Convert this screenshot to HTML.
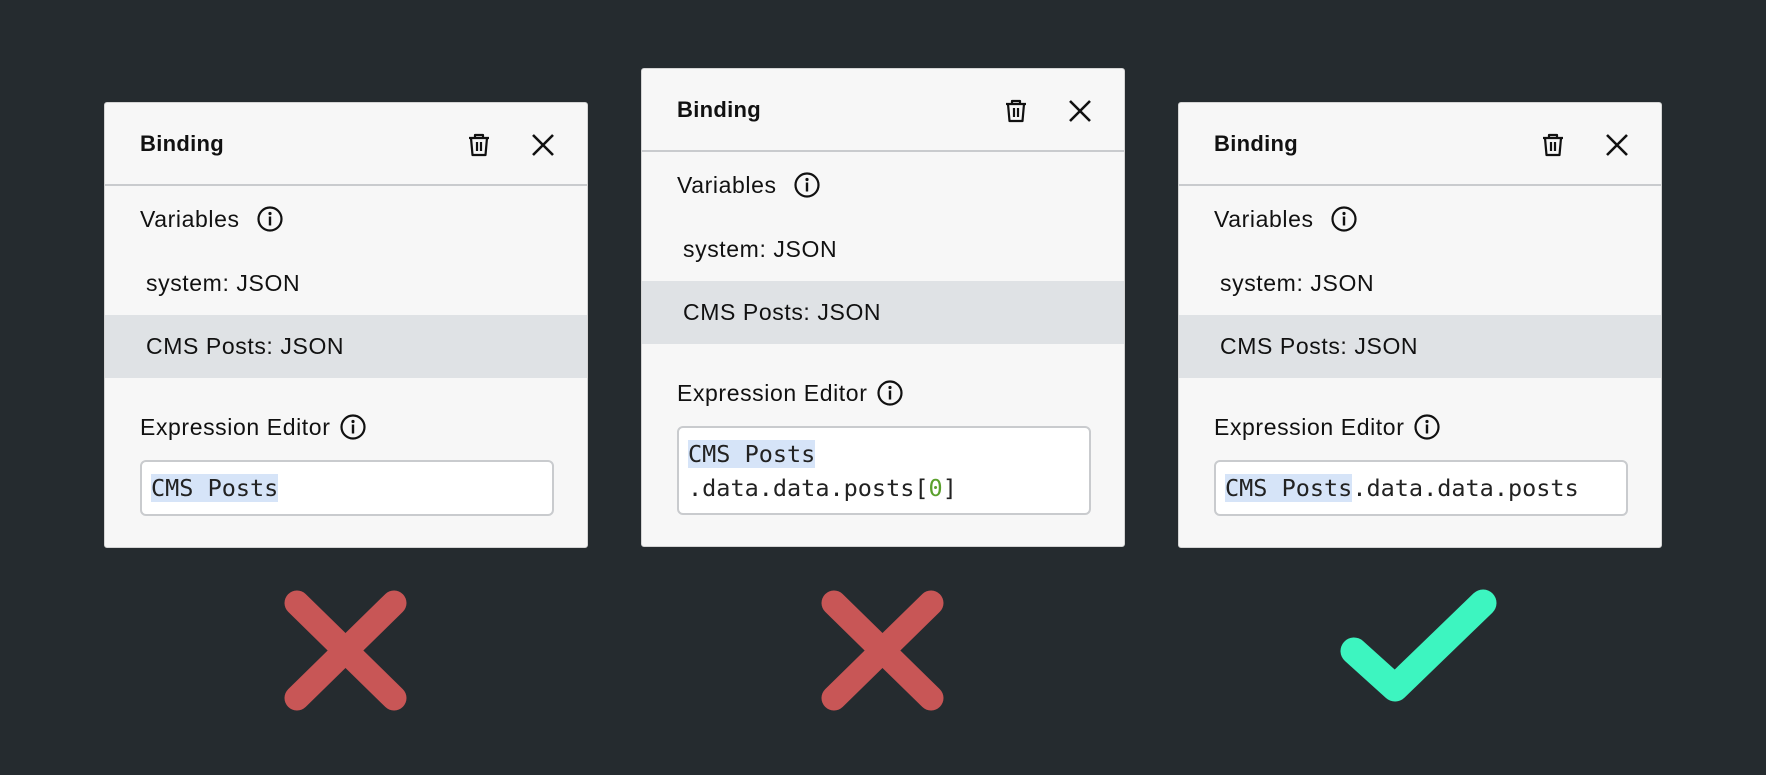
<!DOCTYPE html>
<html><head><meta charset="utf-8"><style>
*{margin:0;padding:0;box-sizing:border-box}
body{width:1766px;height:775px;background:#252b2f;position:relative;overflow:hidden;font-family:"Liberation Sans",sans-serif;color:#111}
.p{position:absolute;width:484px;background:#f7f7f7;border:1px solid #d4d4d4;border-radius:3px;overflow:hidden}
.hd{position:absolute;left:0;top:0;width:100%;height:83px;border-bottom:2px solid #c9cbce}
.t{position:absolute;font-size:23px;letter-spacing:0.6px;line-height:30px;white-space:nowrap}
.b{font-weight:bold;font-size:22px;letter-spacing:0.3px}
.hl{position:absolute;left:0;width:100%;top:212px;height:63px;background:#dfe2e5}
.in{position:absolute;left:35px;width:414px;background:#fff;border:2px solid #c9cbce;border-radius:6px}
.m{position:absolute;left:9px;font-family:"DejaVu Sans Mono","Liberation Mono",monospace;font-size:23.5px;line-height:34px;white-space:pre;color:#222;letter-spacing:0}
.s{background:#d6e4f8}
svg{position:absolute}
</style></head><body>

<!-- Panel 1 -->
<div class="p" style="left:104px;top:102px;height:446px">
 <div class="hd"></div>
 <div class="t b" style="left:35px;top:26px">Binding</div>
 <svg style="left:361px;top:29px" width="26" height="26" viewBox="0 0 26 26" fill="none" stroke="#111" stroke-width="2.2" stroke-linejoin="round"><path d="M3 6h20M9 6V3h8v3M5 6l1.5 17h13L21 6M11 10v9M15 10v9"/></svg>
 <svg style="left:426px;top:30px" width="24" height="24" viewBox="0 0 24 24" stroke="#111" stroke-width="2.6"><path d="M2 2L22 22M22 2L2 22"/></svg>
 <div class="t" style="left:35px;top:101px">Variables</div>
 <svg style="left:152px;top:103px" width="26" height="26" viewBox="0 0 26 26"><circle cx="13" cy="13" r="11.5" fill="none" stroke="#111" stroke-width="2.2"/><circle cx="13" cy="7.5" r="1.6" fill="#111"/><rect x="11.8" y="10.5" width="2.4" height="9" fill="#111"/></svg>
 <div class="t" style="left:41px;top:165px">system: JSON</div>
 <div class="hl"></div>
 <div class="t" style="left:41px;top:228px">CMS Posts: JSON</div>
 <div class="t" style="left:35px;top:309px">Expression Editor</div>
 <svg style="left:235px;top:311px" width="26" height="26" viewBox="0 0 26 26"><circle cx="13" cy="13" r="11.5" fill="none" stroke="#111" stroke-width="2.2"/><circle cx="13" cy="7.5" r="1.6" fill="#111"/><rect x="11.8" y="10.5" width="2.4" height="9" fill="#111"/></svg>
 <div class="in" style="top:357px;height:56px"><div class="m" style="top:9px"><span class="s">CMS Posts</span></div></div>
</div>

<!-- Panel 2 -->
<div class="p" style="left:641px;top:68px;height:479px">
 <div class="hd"></div>
 <div class="t b" style="left:35px;top:26px">Binding</div>
 <svg style="left:361px;top:29px" width="26" height="26" viewBox="0 0 26 26" fill="none" stroke="#111" stroke-width="2.2" stroke-linejoin="round"><path d="M3 6h20M9 6V3h8v3M5 6l1.5 17h13L21 6M11 10v9M15 10v9"/></svg>
 <svg style="left:426px;top:30px" width="24" height="24" viewBox="0 0 24 24" stroke="#111" stroke-width="2.6"><path d="M2 2L22 22M22 2L2 22"/></svg>
 <div class="t" style="left:35px;top:101px">Variables</div>
 <svg style="left:152px;top:103px" width="26" height="26" viewBox="0 0 26 26"><circle cx="13" cy="13" r="11.5" fill="none" stroke="#111" stroke-width="2.2"/><circle cx="13" cy="7.5" r="1.6" fill="#111"/><rect x="11.8" y="10.5" width="2.4" height="9" fill="#111"/></svg>
 <div class="t" style="left:41px;top:165px">system: JSON</div>
 <div class="hl"></div>
 <div class="t" style="left:41px;top:228px">CMS Posts: JSON</div>
 <div class="t" style="left:35px;top:309px">Expression Editor</div>
 <svg style="left:235px;top:311px" width="26" height="26" viewBox="0 0 26 26"><circle cx="13" cy="13" r="11.5" fill="none" stroke="#111" stroke-width="2.2"/><circle cx="13" cy="7.5" r="1.6" fill="#111"/><rect x="11.8" y="10.5" width="2.4" height="9" fill="#111"/></svg>
 <div class="in" style="top:357px;height:89px"><div class="m" style="top:9px"><span class="s">CMS Posts</span>
.data.data.posts[<span style="color:#5aa02c">0</span>]</div></div>
</div>

<!-- Panel 3 -->
<div class="p" style="left:1178px;top:102px;height:446px">
 <div class="hd"></div>
 <div class="t b" style="left:35px;top:26px">Binding</div>
 <svg style="left:361px;top:29px" width="26" height="26" viewBox="0 0 26 26" fill="none" stroke="#111" stroke-width="2.2" stroke-linejoin="round"><path d="M3 6h20M9 6V3h8v3M5 6l1.5 17h13L21 6M11 10v9M15 10v9"/></svg>
 <svg style="left:426px;top:30px" width="24" height="24" viewBox="0 0 24 24" stroke="#111" stroke-width="2.6"><path d="M2 2L22 22M22 2L2 22"/></svg>
 <div class="t" style="left:35px;top:101px">Variables</div>
 <svg style="left:152px;top:103px" width="26" height="26" viewBox="0 0 26 26"><circle cx="13" cy="13" r="11.5" fill="none" stroke="#111" stroke-width="2.2"/><circle cx="13" cy="7.5" r="1.6" fill="#111"/><rect x="11.8" y="10.5" width="2.4" height="9" fill="#111"/></svg>
 <div class="t" style="left:41px;top:165px">system: JSON</div>
 <div class="hl"></div>
 <div class="t" style="left:41px;top:228px">CMS Posts: JSON</div>
 <div class="t" style="left:35px;top:309px">Expression Editor</div>
 <svg style="left:235px;top:311px" width="26" height="26" viewBox="0 0 26 26"><circle cx="13" cy="13" r="11.5" fill="none" stroke="#111" stroke-width="2.2"/><circle cx="13" cy="7.5" r="1.6" fill="#111"/><rect x="11.8" y="10.5" width="2.4" height="9" fill="#111"/></svg>
 <div class="in" style="top:357px;height:56px"><div class="m" style="top:9px"><span class="s">CMS Posts</span>.data.data.posts</div></div>
</div>

<svg style="left:0;top:0" width="1766" height="775" viewBox="0 0 1766 775" fill="none" stroke-linecap="round" stroke-linejoin="round">
 <path d="M297 603L394 698M394 603L297 698" stroke="#c85656" stroke-width="25"/>
 <path d="M834 603L931 698M931 603L834 698" stroke="#c85656" stroke-width="25"/>
 <path d="M1354 651L1395 688L1483 603" stroke="#3df5c0" stroke-width="27"/>
</svg>
</body></html>
